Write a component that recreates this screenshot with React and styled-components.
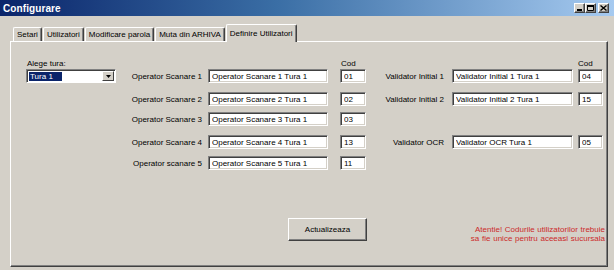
import styled, { createGlobalStyle } from "styled-components";

const GlobalStyle = createGlobalStyle`
  html, body {
    margin: 0;
    padding: 0;
  }
  body {
    background: #d4d0c8;
    font-family: "Liberation Sans", Arial, sans-serif;
  }
  * {
    box-sizing: border-box;
  }
`;

const Window = styled.div`
  width: 614px;
  height: 270px;
  display: flex;
  flex-direction: column;
  background: #d4d0c8;
  overflow: hidden;
`;

const TitleBar = styled.div`
  height: 16px;
  display: flex;
  align-items: center;
  justify-content: space-between;
  padding: 0 5px 0 3px;
  background: linear-gradient(to right, #0a246a 0%, #3a6ea5 45%, #a6caf0 100%);
`;

const Title = styled.span`
  color: #fff;
  font-size: 10px;
  font-weight: bold;
  letter-spacing: 0.1px;
`;

const Controls = styled.div`
  display: flex;
  align-items: center;
`;

const CtrlButton = styled.div`
  width: 11px;
  height: 10px;
  margin-left: ${({ $space }) => ($space ? "2px" : "0")};
  background: #d4d0c8;
  border: 1px solid;
  border-color: #fff #404040 #404040 #fff;
  box-shadow: inset -1px -1px #808080;
  display: flex;
  align-items: center;
  justify-content: center;
`;

const Body = styled.div`
  flex: 1;
  display: flex;
  flex-direction: column;
  padding: 8px 6px 3px 10px;
`;

const TabStrip = styled.div`
  height: 17px;
  display: flex;
  align-items: flex-end;
  padding-left: 2px;
  position: relative;
  z-index: 1;
`;

const Tab = styled.div`
  height: ${({ $active }) => ($active ? "18px" : "14px")};
  margin: ${({ $active }) => ($active ? "0 0 -1px 1px" : "0 0 0 1px")};
  padding: 0 3px;
  display: flex;
  align-items: center;
  font-size: 8px;
  color: #000;
  white-space: nowrap;
  background: #d4d0c8;
  border-top: 1px solid #fff;
  border-left: 1px solid #fff;
  border-right: 1px solid #404040;
  box-shadow: inset -1px 0 #808080;
  border-radius: 2px 2px 0 0;
`;

const Panel = styled.div`
  flex: 1;
  display: flex;
  flex-direction: column;
  border: 1px solid;
  border-color: #fff #404040 #404040 #fff;
  box-shadow: inset -1px -1px #808080;
  padding: 15px 2px 25px 15px;
`;

const Row = styled.div`
  display: grid;
  grid-template-columns: 90px 92px 120px 38px 86px 121px 30px;
  align-items: center;
  height: ${({ $h }) => $h}px;
  margin-top: ${({ $gap }) => $gap || 0}px;
`;

const Caption = styled.span`
  font-size: 8px;
  color: #000;
  padding-left: ${({ $indent }) => $indent || 0}px;
  align-self: end;
  line-height: 10px;
`;

const Label = styled.span`
  font-size: 8px;
  color: #000;
  text-align: right;
  padding-right: ${({ $pad }) => $pad}px;
  white-space: nowrap;
`;

const Field = styled.input`
  width: ${({ $w }) => ($w ? `${$w}px` : "100%")};
  margin-left: ${({ $ml }) => $ml || 0}px;
  height: 14px;
  padding: 0 0 0 3px;
  font-family: "Liberation Sans", Arial, sans-serif;
  font-size: 8px;
  color: #000;
  background: #fff;
  border: 1px solid;
  border-color: #808080 #fff #fff #808080;
  box-shadow: inset 1px 1px #404040, inset -1px -1px #d4d0c8;
  outline: none;
`;

const Combo = styled.div`
  width: 90px;
  height: 14px;
  display: flex;
  align-items: stretch;
  background: #fff;
  border: 1px solid;
  border-color: #808080 #fff #fff #808080;
  box-shadow: inset 1px 1px #404040;
  padding: 2px 1px 1px 2px;
`;

const ComboValue = styled.div`
  flex: 1;
  display: flex;
  align-items: center;
`;

const Selected = styled.span`
  font-size: 8px;
  line-height: 9px;
  color: #fff;
  background: #0a246a;
  padding: 0 9px 0 1px;
`;

const DropButton = styled.div`
  width: 12px;
  margin-top: -1px;
  background: #d4d0c8;
  border: 1px solid;
  border-color: #fff #404040 #404040 #fff;
  display: flex;
  align-items: center;
  justify-content: center;
`;

const Footer = styled.div`
  margin-top: auto;
  display: flex;
  align-items: flex-end;
  justify-content: space-between;
`;

const Button = styled.button`
  margin-left: 262px;
  width: 79px;
  height: 23px;
  font-family: "Liberation Sans", Arial, sans-serif;
  font-size: 8px;
  color: #000;
  background: #d4d0c8;
  border: 1px solid;
  border-color: #fff #404040 #404040 #fff;
  box-shadow: inset -1px -1px #808080;
  padding: 0;
`;

const Warning = styled.div`
  font-size: 8px;
  line-height: 9px;
  color: #cc2a2a;
  text-align: right;
  word-spacing: 0.5px;
  margin-bottom: -2px;
`;

const tabs = ["Setari", "Utilizatori", "Modificare parola", "Muta din ARHIVA", "Definire Utilizatori"];

const rows = [
  {
    op: "Operator Scanare 1",
    value: "Operator Scanare 1 Tura 1",
    cod: "01",
    val: { label: "Validator Initial 1", value: "Validator Initial 1 Tura 1", cod: "04" },
    gap: 0,
    combo: true,
  },
  {
    op: "Operator Scanare 2",
    value: "Operator Scanare 2 Tura 1",
    cod: "02",
    val: { label: "Validator Initial 2", value: "Validator Initial 2 Tura 1", cod: "15" },
    gap: 9,
  },
  { op: "Operator Scanare 3", value: "Operator Scanare 3 Tura 1", cod: "03", gap: 6 },
  {
    op: "Operator Scanare 4",
    value: "Operator Scanare 4 Tura 1",
    cod: "13",
    val: { label: "Validator OCR", value: "Validator OCR Tura 1", cod: "05" },
    gap: 9,
  },
  { op: "Operator scanare 5", value: "Operator Scanare 5 Tura 1", cod: "11", gap: 7 },
];

const Arrow = () => (
  <svg width="5" height="3" viewBox="0 0 5 3">
    <path d="M0 0h5L2.5 3z" fill="#000" />
  </svg>
);

const App = () => (
  <>
    <GlobalStyle />
    <Window>
      <TitleBar>
        <Title>Configurare</Title>
        <Controls>
          <CtrlButton>
            <svg width="6" height="6" viewBox="0 0 6 6">
              <rect x="0" y="4" width="5" height="2" fill="#000" />
            </svg>
          </CtrlButton>
          <CtrlButton>
            <svg width="7" height="6" viewBox="0 0 7 6">
              <path d="M0.5 0.5h6v5h-6z" fill="none" stroke="#000" />
              <rect x="0" y="0" width="7" height="2" fill="#000" />
            </svg>
          </CtrlButton>
          <CtrlButton $space>
            <svg width="7" height="6" viewBox="0 0 7 6">
              <path d="M0.5 0.5l6 5M6.5 0.5l-6 5" stroke="#000" strokeWidth="1.4" />
            </svg>
          </CtrlButton>
        </Controls>
      </TitleBar>
      <Body>
        <TabStrip>
          {tabs.map((t, i) => (
            <Tab key={t} $active={i === tabs.length - 1}>
              {t}
            </Tab>
          ))}
        </TabStrip>
        <Panel>
          <Row $h={12}>
            <Caption $indent={1}>Alege tura:</Caption>
            <span />
            <span />
            <Caption $indent={13}>Cod</Caption>
            <span />
            <span />
            <Caption $indent={5}>Cod</Caption>
          </Row>
          {rows.map((r) => (
            <Row key={r.op} $h={14} $gap={r.gap}>
              {r.combo ? (
                <Combo>
                  <ComboValue>
                    <Selected>Tura 1</Selected>
                  </ComboValue>
                  <DropButton>
                    <Arrow />
                  </DropButton>
                </Combo>
              ) : (
                <span />
              )}
              <Label $pad={6}>{r.op}</Label>
              <Field readOnly value={r.value} />
              <Field readOnly value={r.cod} $w={26} $ml={12} />
              {r.val ? (
                <>
                  <Label $pad={8}>{r.val.label}</Label>
                  <Field readOnly value={r.val.value} />
                  <Field readOnly value={r.val.cod} $w={25} $ml={5} />
                </>
              ) : null}
            </Row>
          ))}
          <Footer>
            <Button>Actualizeaza</Button>
            <Warning>
              Atentie! Codurile utilizatorilor trebuie
              <br />
              sa fie unice pentru aceeasi sucursala
            </Warning>
          </Footer>
        </Panel>
      </Body>
    </Window>
  </>
);

export default App;
